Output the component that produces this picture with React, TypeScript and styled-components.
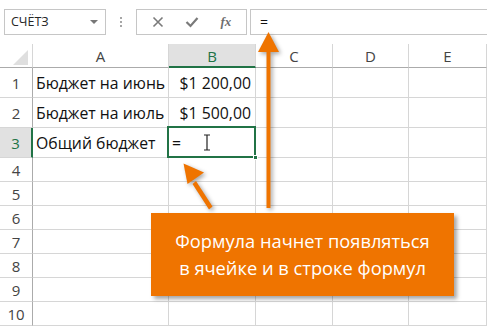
import React from "react";
import styled, { createGlobalStyle } from "styled-components";

const GREEN = "#217346";
const ORANGE = "#ef7400";
const LINE = "#d6d6d6";

const GlobalStyle = createGlobalStyle`
  html, body {
    margin: 0;
    padding: 0;
    background: #ffffff;
  }
  body {
    width: 487px;
    height: 328px;
    overflow: hidden;
    font-family: "Open Sans", "Noto Sans", sans-serif;
  }
`;

const Page = styled.div`
  position: relative;
  width: 487px;
  height: 328px;
  overflow: hidden;
  display: flex;
  flex-direction: column;
`;

const Toolbar = styled.div`
  display: flex;
  align-items: center;
  height: 44px;
  padding: 0 0 1px 4px;
  box-sizing: border-box;
`;

const NameBox = styled.div`
  width: 102px;
  height: 26px;
  box-sizing: border-box;
  border: 1px solid #c6c6c6;
  display: flex;
  align-items: center;
  justify-content: space-between;
  padding: 0 6px 0 6px;
  font-size: 12.5px;
  color: #262626;
`;

const DropArrow = styled.span`
  width: 0;
  height: 0;
  border-left: 4px solid transparent;
  border-right: 4px solid transparent;
  border-top: 4px solid #777;
  margin-right: 1px;
`;

const Grip = styled.div`
  width: 30px;
  display: flex;
  flex-direction: column;
  align-items: center;
  gap: 2px;
`;

const GripDot = styled.span`
  width: 2px;
  height: 2px;
  background: #a6a6a6;
`;

const FxButtons = styled.div`
  width: 111px;
  height: 26px;
  box-sizing: border-box;
  border: 1px solid #c6c6c6;
  display: flex;
  align-items: center;
  justify-content: space-around;
  padding: 0 4px;
  color: #7a7a7a;
`;

const FxLabel = styled.span`
  font-family: "Liberation Serif", serif;
  font-style: italic;
  font-size: 13px;
  font-weight: bold;
  color: #6f6f6f;
`;

const FormulaBar = styled.div`
  flex: 1;
  height: 26px;
  margin-left: 3px;
  margin-right: -2px;
  box-sizing: border-box;
  border: 1px solid #c6c6c6;
  display: flex;
  align-items: center;
  padding-left: 9px;
  font-size: 14px;
  color: #111;
`;

const Sheet = styled.div`
  display: grid;
  grid-template-columns: 33px 136px 87px 77px 76px 1fr;
  grid-template-rows: 24px repeat(3, 30px) repeat(7, 24px);
`;

const HeadCell = styled.div<{ $active?: boolean; $corner?: boolean }>`
  position: relative;
  box-sizing: border-box;
  border-right: 1px solid ${LINE};
  border-bottom: ${(p) => (p.$active ? `2px solid ${GREEN}` : "1px solid #ababab")};
  background: ${(p) => (p.$active ? "#e1e1e1" : "#ffffff")};
  color: ${(p) => (p.$active ? GREEN : "#444")};
  display: flex;
  align-items: center;
  justify-content: center;
  font-size: 15px;
  padding-top: ${(p) => (p.$active ? "1px" : "0")};
`;

const Corner = styled.span`
  position: absolute;
  right: 4px;
  bottom: 2px;
  width: 0;
  height: 0;
  border-left: 15px solid transparent;
  border-bottom: 15px solid #dfdfdf;
`;

const RowNum = styled.div<{ $active?: boolean }>`
  box-sizing: border-box;
  border-right: ${(p) => (p.$active ? `2px solid ${GREEN}` : "1px solid #ababab")};
  border-bottom: 1px solid ${LINE};
  background: ${(p) => (p.$active ? "#e1e1e1" : "#ffffff")};
  color: ${(p) => (p.$active ? GREEN : "#444")};
  display: flex;
  align-items: center;
  justify-content: center;
  font-size: 15px;
`;

const Cell = styled.div<{ $right?: boolean; $selected?: boolean }>`
  position: relative;
  box-sizing: border-box;
  border-right: 1px solid ${LINE};
  border-bottom: 1px solid ${LINE};
  display: flex;
  align-items: center;
  justify-content: ${(p) => (p.$right ? "flex-end" : "flex-start")};
  padding: 0 4px 0 3px;
  font-size: 15.8px;
  color: #111;
  white-space: nowrap;
  ${(p) =>
    p.$selected &&
    `
    &::after {
      content: "";
      position: absolute;
      left: -2px;
      top: -2px;
      right: -1px;
      bottom: -1px;
      border: 2px solid ${GREEN};
    }
    &::before {
      content: "";
      position: absolute;
      right: -3px;
      bottom: -3px;
      width: 5px;
      height: 5px;
      background: ${GREEN};
      border: 1px solid #fff;
      box-sizing: border-box;
      z-index: 2;
    }
  `}
`;

const Cursor = styled.svg`
  margin-left: 22px;
`;

const Callout = styled.div`
  position: absolute;
  left: 151px;
  top: 213px;
  width: 303px;
  height: 83px;
  background: ${ORANGE};
  box-shadow: 3px 3px 4px rgba(0, 0, 0, 0.35);
  color: #ffffff;
  font-size: 18.3px;
  line-height: 27px;
  display: flex;
  flex-direction: column;
  align-items: center;
  justify-content: center;
  padding-bottom: 2px;
  box-sizing: border-box;
`;

const ArrowLayer = styled.svg`
  position: absolute;
  left: 0;
  top: 0;
  pointer-events: none;
  filter: drop-shadow(2px 2px 2px rgba(0, 0, 0, 0.35));
`;

const rows: [string, string][] = [
  ["Бюджет на июнь", "$1 200,00"],
  ["Бюджет на июль", "$1 500,00"],
];

const cols = ["A", "B", "C", "D", "E"];

export default function App() {
  return (
    <Page>
      <GlobalStyle />
      <Toolbar>
        <NameBox>
          СЧЁТЗ
          <DropArrow />
        </NameBox>
        <Grip>
          <GripDot />
          <GripDot />
          <GripDot />
        </Grip>
        <FxButtons>
          <svg width="12" height="12" viewBox="0 0 12 12">
            <path d="M1.5 1.5 L10.5 10.5 M10.5 1.5 L1.5 10.5" stroke="#7a7a7a" strokeWidth="1.6" />
          </svg>
          <svg width="14" height="12" viewBox="0 0 14 12">
            <path d="M1.5 6 L5.5 10 L12.5 2" stroke="#7a7a7a" strokeWidth="2.2" fill="none" />
          </svg>
          <FxLabel>fx</FxLabel>
        </FxButtons>
        <FormulaBar>=</FormulaBar>
      </Toolbar>

      <Sheet>
        <HeadCell $corner>
          <Corner />
        </HeadCell>
        {cols.map((c) => (
          <HeadCell key={c} $active={c === "B"}>
            {c}
          </HeadCell>
        ))}

        {rows.map(([label, value], i) => (
          <React.Fragment key={i}>
            <RowNum>{i + 1}</RowNum>
            <Cell>{label}</Cell>
            <Cell $right>{value}</Cell>
            <Cell />
            <Cell />
            <Cell />
          </React.Fragment>
        ))}

        <RowNum $active>3</RowNum>
        <Cell>Общий бюджет</Cell>
        <Cell $selected>
          =
          <Cursor width="8" height="17" viewBox="0 0 8 17">
            <path d="M1 1 H7 M4 1 V16 M1 16 H7" stroke="#222" strokeWidth="1.2" fill="none" />
          </Cursor>
        </Cell>
        <Cell />
        <Cell />
        <Cell />

        {[4, 5, 6, 7, 8, 9, 10].map((n) => (
          <React.Fragment key={n}>
            <RowNum>{n}</RowNum>
            <Cell />
            <Cell />
            <Cell />
            <Cell />
            <Cell />
          </React.Fragment>
        ))}
      </Sheet>

      <ArrowLayer width="487" height="328" viewBox="0 0 487 328">
        <g fill={ORANGE}>
          <rect x="266.5" y="48" width="4" height="160" />
          <polygon points="268.5,32 279,52 258,52" />
          <polygon points="209,209.5 212.5,206.5 196,181 192.5,184" />
          <polygon points="183.5,163.5 204,172.5 187.5,184" />
        </g>
      </ArrowLayer>

      <Callout>
        <span>Формула начнет появляться</span>
        <span>в ячейке и в строке формул</span>
      </Callout>
    </Page>
  );
}
